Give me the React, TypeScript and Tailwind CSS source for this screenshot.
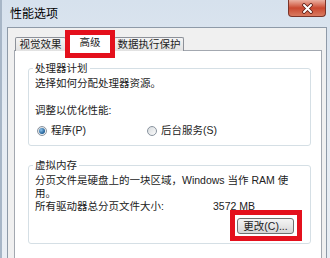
const font = { fontFamily: '"Liberation Sans", "Noto Sans CJK SC", sans-serif' }

function Radio({ checked }: { checked?: boolean }) {
  return (
    <span className="flex h-[10px] w-[10px] items-center justify-center rounded-full border border-[#8a949f] bg-gradient-to-br from-[#d8dcdf] to-[#fbfbfb]">
      {checked && (
        <span className="h-[6px] w-[6px] rounded-full bg-[radial-gradient(circle_at_35%_35%,#8cc2ec,#1d5c93_70%)]" />
      )}
    </span>
  )
}

function Tab({ label, w }: { label: string; w: string }) {
  return (
    <div
      className={`${w} flex h-[14px] items-center justify-center rounded-t-[2px] border border-b-0 border-[#8d9199] bg-gradient-to-b from-[#f4f4f4] to-[#e2e2e2]`}
    >
      {label}
    </div>
  )
}

export default function App() {
  return (
    <div
      style={font}
      className="flex h-[258px] w-[330px] flex-col overflow-hidden border-l-2 border-[#a7b6c7] bg-gradient-to-b from-[#d6e1ed] via-[#e6ecf3] to-[#e9eef4] text-[10.5px] leading-[13px] text-[#222]"
    >
      {/* title bar */}
      <div className="flex h-[27px] shrink-0 items-start justify-between">
        <div className="pl-[8px] pt-[7px] text-[12px] leading-[14px] text-black">性能选项</div>
        <div className="mr-[4px] flex h-[17px] w-[38px] items-center justify-center rounded-b-[4px] border border-t-0 border-[#7a3429] bg-gradient-to-b from-[#eab0a2] via-[#c9472f] to-[#d97a60]">
          <svg width="13" height="11" viewBox="0 0 13 11">
            <path d="M3 2 L10 9 M10 2 L3 9" stroke="#5a1c14" strokeWidth="3.6" strokeLinecap="round" />
            <path d="M3 2 L10 9 M10 2 L3 9" stroke="#ffffff" strokeWidth="2" strokeLinecap="round" />
          </svg>
        </div>
      </div>

      {/* client area */}
      <div className="ml-[5px] mr-[3px] flex flex-1 flex-col border border-b-0 border-[#8e9aa8] bg-[#f0f0f0] pl-[6px] pt-[6px]">
        {/* tabs */}
        <div className="relative z-10 -mb-px flex h-[17px] items-end pl-px">
          <Tab label="视觉效果" w="w-[51px]" />
          <div className="relative -ml-px flex h-[17px] w-[50px] items-start justify-center border border-b-0 border-[#8d9199] bg-white pt-[1px]">
            高级
            <div className="absolute -bottom-[7px] -left-px -right-px -top-[5px] border-[5px] border-[#e4101c]" />
          </div>
          <Tab label="数据执行保护" w="w-[70px] -ml-px" />
        </div>

        {/* panel */}
        <div className="flex w-[308px] flex-1 flex-col border border-b-0 border-[#a3a8b0] bg-white pl-[13px] pt-[11px]">
          <fieldset className="w-[283px] rounded-[3px] border border-[#d5dfe5] px-[6px] pb-[8px]">
            <legend className="-ml-[2px] px-[2px]">处理器计划</legend>
            <p className="pt-[2px]">选择如何分配处理器资源。</p>
            <p className="mt-[14px]">调整以优化性能:</p>
            <div className="mt-[7px] flex h-[13px] items-center">
              <div className="flex w-[112px] items-center gap-[4px] pl-[2px]">
                <Radio checked />
                <span>程序(P)</span>
              </div>
              <div className="flex items-center gap-[4px]">
                <Radio />
                <span>后台服务(S)</span>
              </div>
            </div>
          </fieldset>

          <fieldset className="mt-[13px] w-[283px] rounded-[3px] border border-[#d5dfe5] px-[6px] pb-[9px]">
            <legend className="-ml-[2px] px-[2px]">虚拟内存</legend>
            <div className="pt-[2px] whitespace-nowrap">分页文件是硬盘上的一块区域，Windows 当作 RAM 使</div>
            <div>用。</div>
            <div className="flex">
              <span className="w-[178px]">所有驱动器总分页文件大小:</span>
              <span>3572 MB</span>
            </div>
            <div className="mt-[5px] flex justify-end pr-[10px]">
              <button className="relative flex h-[16px] w-[57px] items-center justify-center rounded-[3px] border border-[#707070] bg-gradient-to-b from-[#f4f4f4] via-[#e6e6e6] to-[#d4d4d4] text-[10.5px] leading-[13px]">
                更改(C)...
                <span className="absolute -bottom-[8px] -left-[8px] -right-[9px] -top-[9px] border-[5px] border-[#e4101c]" />
              </button>
            </div>
          </fieldset>
        </div>
      </div>
    </div>
  )
}
